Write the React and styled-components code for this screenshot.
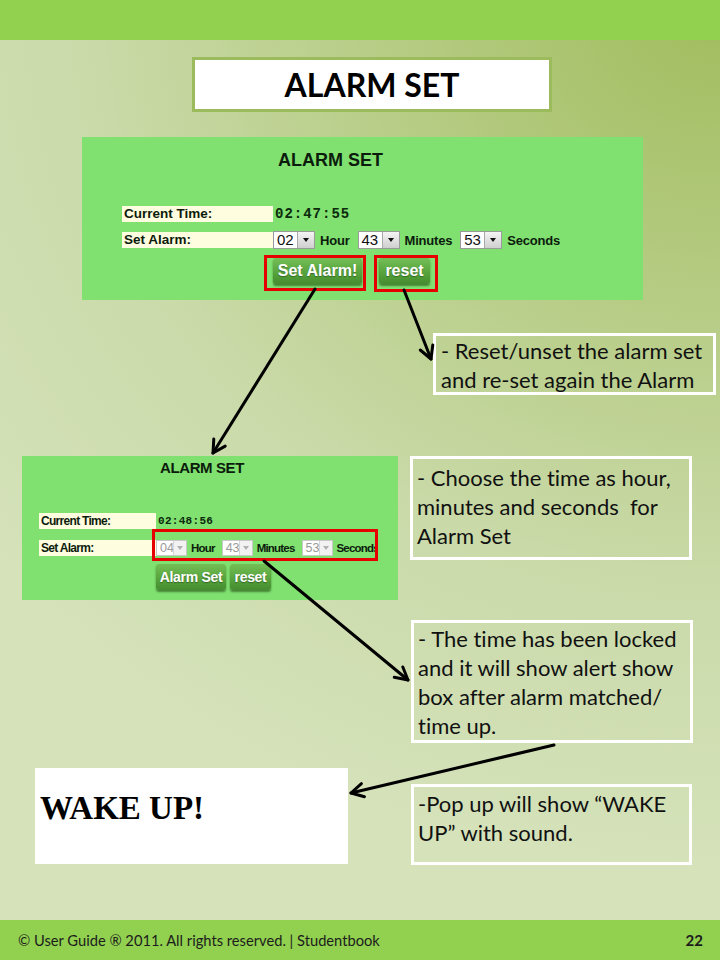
import React from 'react';
import styled, { createGlobalStyle } from 'styled-components';

const GlobalStyle = createGlobalStyle`
  html, body {
    margin: 0;
    padding: 0;
  }
  body {
    font-family: Lato, "Open Sans", sans-serif;
    font-variant-ligatures: none;
  }
`;

/* slide frame */
const Slide = styled.div`
  position: relative;
  width: 720px;
  height: 960px;
  overflow: hidden;
  display: flex;
  flex-direction: column;
  background: radial-gradient(ellipse 130% 90% at 100% 0%, #a0bc5d 0%, #b6cc84 35%, #cadaa9 68%, #d5e2ba 100%);
`;

const TopBar = styled.div`
  height: 40px;
  flex: none;
  background: #92d050;
`;

const Body = styled.div`
  flex: 1;
  display: flex;
  flex-direction: column;
  align-items: flex-start;
`;

const Footer = styled.div`
  height: 40px;
  flex: none;
  background: #92d050;
  display: flex;
  align-items: center;
  justify-content: space-between;
  padding: 0 17px 0 18px;
  font-family: Lato, "Open Sans", sans-serif;
  font-size: 14.7px;
  color: #1c1c1c;
`;

const PageNo = styled.span`
  font-weight: 700;
  font-size: 15px;
`;

const TitleBox = styled.div`
  box-sizing: border-box;
  margin: 17px 0 0 192px;
  width: 360px;
  height: 55px;
  background: #fff;
  border: 3px solid #9cbb5c;
  display: flex;
  align-items: center;
  justify-content: center;
  font-family: Lato, "Open Sans", sans-serif;
  font-weight: 700;
  font-size: 32px;
  color: #000;
`;

const Row = styled.div`
  display: flex;
  align-items: flex-start;
  margin-top: ${({ $mt }) => $mt}px;
`;

const Block = styled.div`
  margin-top: ${({ $mt }) => $mt || 0}px;
  margin-left: ${({ $ml }) => $ml || 0}px;
`;

/* annotation boxes */
const Note = styled.div`
  box-sizing: border-box;
  width: ${({ $w }) => $w}px;
  height: ${({ $h }) => $h}px;
  margin-left: ${({ $ml }) => $ml || 0}px;
  margin-top: ${({ $mt }) => $mt || 0}px;
  border: 3px solid #fff;
  padding: ${({ $pt }) => $pt || 0}px 4px 0 ${({ $pl }) => $pl || 4}px;
  font-family: Lato, "Open Sans", sans-serif;
  font-size: 22px;
  line-height: 29px;
  color: #111;
  white-space: nowrap;
`;

const WakeBox = styled.div`
  box-sizing: border-box;
  width: 313px;
  height: 96px;
  margin-left: 35px;
  background: #fff;
  padding: 22px 0 0 5px;
  font-family: "Liberation Serif", "Times New Roman", serif;
  font-weight: 700;
  font-size: 33px;
  color: #000;
`;

/* alarm screenshot panels */
const sizes = {
  full: {
    width: 561, height: 163, padTop: 14, titleLeft: 196, titleSize: 18, titleSpacing: 0,
    labelLeft: 40, labelWidth: 151, labelSize: 13.5, labelSpacing: 0,
    rowTop: 37, rowGap: 10, rowHeight: 16, clockSize: 14, clockSpacing: 1,
    valueWidth: 24, arrowWidth: 16, selectHeight: 18, valueSize: 15,
    selectGap: 5, unitGap: 8, unitSpacing: -0.2,
    btnTop: 9, btnSize: 16, btnSpacing: 0,
  },
  compact: {
    width: 376, height: 144, padTop: 3, titleLeft: 138, titleSize: 15, titleSpacing: -0.4,
    labelLeft: 17, labelWidth: 117, labelSize: 12, labelSpacing: -0.7,
    rowTop: 36, rowGap: 11, rowHeight: 16, clockSize: 11, clockSpacing: 0.3,
    valueWidth: 17, arrowWidth: 12, selectHeight: 16, valueSize: 12.5,
    selectGap: 4, unitGap: 7, unitSpacing: -0.8,
    btnTop: 8, btnSize: 14, btnSpacing: -0.3,
  },
};

const Panel = styled.div`
  box-sizing: border-box;
  width: ${({ $s }) => $s.width}px;
  height: ${({ $s }) => $s.height}px;
  background: #80e070;
  padding-top: ${({ $s }) => $s.padTop}px;
  font-family: "Liberation Sans", Arial, sans-serif;
  color: #0c1c0c;
`;

const PanelTitle = styled.div`
  padding-left: ${({ $s }) => $s.titleLeft}px;
  font-weight: 700;
  font-size: ${({ $s }) => $s.titleSize}px;
  line-height: 18px;
  letter-spacing: ${({ $s }) => $s.titleSpacing}px;
`;

const FormRow = styled.div`
  display: flex;
  align-items: center;
  height: ${({ $s }) => $s.rowHeight}px;
  margin-top: ${({ $mt }) => $mt}px;
  padding-left: ${({ $s }) => $s.labelLeft}px;
`;

const LabelCell = styled.div`
  box-sizing: border-box;
  width: ${({ $s }) => $s.labelWidth}px;
  height: ${({ $s }) => $s.rowHeight}px;
  flex: none;
  background: #fffde0;
  padding-left: 2px;
  font-weight: 700;
  font-size: ${({ $s }) => $s.labelSize}px;
  letter-spacing: ${({ $s }) => $s.labelSpacing}px;
  line-height: ${({ $s }) => $s.rowHeight}px;
`;

const Clock = styled.span`
  margin-left: 2px;
  font-family: "Liberation Mono", "Courier New", monospace;
  font-weight: 700;
  font-size: ${({ $s }) => $s.clockSize}px;
  letter-spacing: ${({ $s }) => $s.clockSpacing}px;
  color: #0b2a0b;
`;

const SelectBox = styled.span`
  box-sizing: border-box;
  display: inline-flex;
  flex: none;
  height: ${({ $s }) => $s.selectHeight}px;
  margin-right: ${({ $s }) => $s.selectGap}px;
  background: #fff;
  border: 1px solid ${({ $off }) => ($off ? '#c8c8c8' : '#9a9a9a')};
`;

const SelectValue = styled.span`
  width: ${({ $s }) => $s.valueWidth - 1}px;
  padding-left: 3px;
  box-sizing: border-box;
  font-size: ${({ $s }) => $s.valueSize}px;
  line-height: ${({ $s }) => $s.selectHeight - 2}px;
  color: ${({ $off }) => ($off ? '#9a9a9a' : '#111')};
`;

const SelectArrow = styled.span`
  width: ${({ $s }) => $s.arrowWidth}px;
  display: flex;
  align-items: center;
  justify-content: center;
  background: ${({ $off }) => ($off ? '#f2f2f2' : 'linear-gradient(#f4f4f4, #cfcfcf)')};
  border-left: 1px solid ${({ $off }) => ($off ? '#d6d6d6' : '#a8a8a8')};
  &::after {
    content: '';
    border-left: 3.5px solid transparent;
    border-right: 3.5px solid transparent;
    border-top: 4px solid ${({ $off }) => ($off ? '#b0b0b0' : '#111')};
  }
`;

const Unit = styled.span`
  margin-right: ${({ $s }) => $s.unitGap}px;
  font-weight: 700;
  font-size: ${({ $s }) => $s.labelSize - 0.5}px;
  letter-spacing: ${({ $s }) => $s.unitSpacing}px;
  white-space: nowrap;
`;

const ButtonRow = styled.div`
  display: flex;
  gap: ${({ $gap }) => $gap}px;
  margin-top: ${({ $s }) => $s.btnTop}px;
  margin-left: ${({ $shift }) => $shift || 0}px;
  padding-left: ${({ $s }) => $s.labelLeft + $s.labelWidth}px;
`;

const GreenButton = styled.span`
  box-sizing: border-box;
  display: inline-flex;
  align-items: center;
  justify-content: center;
  width: ${({ $w }) => $w}px;
  height: 26px;
  border-radius: 3px;
  background: linear-gradient(#74bf55, #509c37 70%, #468c30);
  box-shadow: 0 2px 2px rgba(20, 60, 10, 0.55);
  color: #fff;
  font-weight: 700;
  font-size: ${({ $s }) => $s.btnSize}px;
  letter-spacing: ${({ $s }) => $s.btnSpacing}px;
  text-shadow: 0 1px 1px rgba(0, 0, 0, 0.35);
  white-space: nowrap;
`;

/* red highlight drawn over the screenshot, kept out of the flow with negative margins */
const Marked = styled.span`
  display: inline-flex;
  align-items: center;
  box-sizing: border-box;
  flex: none;
  overflow: hidden;
  width: ${({ $w }) => ($w ? `${$w}px` : 'auto')};
  border: 3px solid #e60000;
  margin: ${({ $m }) => $m};
  padding: ${({ $p }) => $p};
`;

const ArrowLayer = styled.svg`
  position: absolute;
  left: 0;
  top: 0;
  pointer-events: none;
`;

const Select = ({ s, value, off }) => (
  <SelectBox $s={s} $off={off}>
    <SelectValue $s={s} $off={off}>{value}</SelectValue>
    <SelectArrow $s={s} $off={off} />
  </SelectBox>
);

const AlarmPanel = ({ compact, time, hour, min, sec, setLabel }) => {
  const s = compact ? sizes.compact : sizes.full;
  const selects = (
    <>
      <Select s={s} value={hour} off={compact} />
      <Unit $s={s}>Hour</Unit>
      <Select s={s} value={min} off={compact} />
      <Unit $s={s}>Minutes</Unit>
      <Select s={s} value={sec} off={compact} />
      <Unit $s={s}>Seconds</Unit>
    </>
  );
  return (
    <Panel $s={s}>
      <PanelTitle $s={s}>ALARM SET</PanelTitle>
      <FormRow $s={s} $mt={s.rowTop}>
        <LabelCell $s={s}>Current Time:</LabelCell>
        <Clock $s={s}>{time}</Clock>
      </FormRow>
      <FormRow $s={s} $mt={s.rowGap}>
        <LabelCell $s={s}>Set Alarm:</LabelCell>
        {compact ? (
          <Marked $w={226} $m="-11px 0 -5px -4px" $p="8px 0 2px 1px">{selects}</Marked>
        ) : (
          selects
        )}
      </FormRow>
      {compact ? (
        <ButtonRow $s={s} $gap={4}>
          <GreenButton $s={s} $w={70}>{setLabel}</GreenButton>
          <GreenButton $s={s} $w={41}>reset</GreenButton>
        </ButtonRow>
      ) : (
        <ButtonRow $s={s} $gap={8} $shift={-9}>
          <Marked $m="-2px 0 -4px 0" $p="0 1px 4px 6px">
            <GreenButton $s={s} $w={89}>{setLabel}</GreenButton>
          </Marked>
          <Marked $m="-2px 0 -5px 0" $p="0 5px 5px 2px">
            <GreenButton $s={s} $w={51}>reset</GreenButton>
          </Marked>
        </ButtonRow>
      )}
    </Panel>
  );
};

const arrows = [
  [315, 289, 213, 453],
  [404, 290, 431, 359],
  [264, 561, 408, 680],
  [554, 745, 351, 793],
];

const Arrow = ({ x1, y1, x2, y2 }) => {
  const a = Math.atan2(y2 - y1, x2 - x1);
  const len = 14;
  const spread = 0.5;
  const p1 = [x2 - len * Math.cos(a - spread), y2 - len * Math.sin(a - spread)];
  const p2 = [x2 - len * Math.cos(a + spread), y2 - len * Math.sin(a + spread)];
  return (
    <g stroke="#000" strokeWidth="3" fill="none" strokeLinecap="round" strokeLinejoin="round">
      <line x1={x1} y1={y1} x2={x2} y2={y2} />
      <polyline points={`${p1[0]},${p1[1]} ${x2},${y2} ${p2[0]},${p2[1]}`} />
    </g>
  );
};

export default function App() {
  return (
    <>
      <GlobalStyle />
      <Slide>
        <TopBar />
        <Body>
          <TitleBox>ALARM SET</TitleBox>

          <Block $mt={25} $ml={82}>
            <AlarmPanel time="02:47:55" hour="02" min="43" sec="53" setLabel="Set Alarm!" />
          </Block>

          <Note $w={283} $h={62} $ml={433} $mt={33} $pl={5}>
            - Reset/unset the alarm set<br />
            and re-set again the Alarm
          </Note>

          <Row $mt={61}>
            <Block $ml={22}>
              <AlarmPanel compact time="02:48:56" hour="04" min="43" sec="53" setLabel="Alarm Set" />
            </Block>
            <Note $w={282} $h={104} $ml={12} $pt={4}>
              - Choose the time as hour,<br />
              minutes and seconds&nbsp; for<br />
              Alarm Set
            </Note>
          </Row>

          <Note $w={282} $h={123} $ml={411} $mt={20} $pt={1}>
            - The time has been locked<br />
            and it will show alert show<br />
            box after alarm matched/<br />
            time up.
          </Note>

          <Row $mt={25}>
            <WakeBox>WAKE UP!</WakeBox>
            <Note $w={281} $h={81} $ml={63} $mt={16} $pt={2}>
              -Pop up will show “WAKE<br />
              UP” with sound.
            </Note>
          </Row>
        </Body>
        <Footer>
          <span>© User Guide ® 2011. All rights reserved. | Studentbook</span>
          <PageNo>22</PageNo>
        </Footer>
        <ArrowLayer width="720" height="960" viewBox="0 0 720 960">
          {arrows.map(([x1, y1, x2, y2], i) => (
            <Arrow key={i} x1={x1} y1={y1} x2={x2} y2={y2} />
          ))}
        </ArrowLayer>
      </Slide>
    </>
  );
}
